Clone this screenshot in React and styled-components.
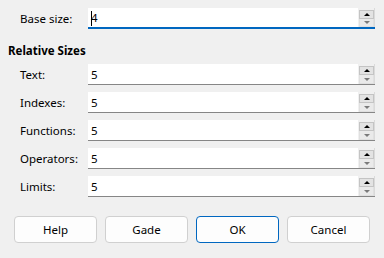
import React from 'react';
import styled, { createGlobalStyle } from 'styled-components';

const GlobalStyle = createGlobalStyle`
    html, body{
        margin: 0;
        padding: 0;
        background: #f0f0f0;
    }
    body{
        font-family: "Noto Sans", "Open Sans", sans-serif;
        font-size: 11.5px;
        color: #000;
    }
`;

const Dialog = styled.div`
    width: 384px;
    height: 258px;
    box-sizing: border-box;
    padding-top: 8px;
    background: #f0f0f0;
    display: flex;
    flex-direction: column;
`;

const FieldRow = styled.div`
    display: grid;
    grid-template-columns: 68px 287px;
    align-items: center;
    height: 21px;
    margin-left: 20px;
    margin-bottom: ${props => props.last ? '0' : '7px'};
`;

const Label = styled.label`
    line-height: 16px;
    white-space: nowrap;
`;

const SectionTitle = styled.div`
    font-weight: 700;
    line-height: 16px;
    margin: 14px 0 5px 8px;
`;

const SpinBox = styled.div`
    display: flex;
    height: 21px;
    box-sizing: border-box;
    border-bottom: ${props => props.focused ? '2px solid #0067c0' : '1px solid #868686'};
`;

const Value = styled.div`
    flex: 1;
    background: #fff;
    display: flex;
    align-items: center;
    padding-left: 3px;
    margin-right: 1px;
    line-height: 16px;
    padding-top: 1px;
`;

const Caret = styled.span`
    display: inline-block;
    width: 1px;
    height: 15px;
    background: #000;
    margin-right: -1px;
`;

const Spinner = styled.div`
    width: 16px;
    display: flex;
    flex-direction: column;
    padding-top: 2px;
    box-sizing: border-box;
    border-right: 1px solid #dadada;
`;

const SpinButton = styled.div`
    height: 9px;
    box-sizing: border-box;
    display: flex;
    align-items: center;
    justify-content: center;
    background: ${props => props.up ? '#e3e3e3' : '#eaeaea'};
    border: 1px solid ${props => props.up ? '#c4c4c4' : '#e0e0e0'};
    border-top-width: ${props => props.up ? '1px' : '0'};

    &::after{
        content: "";
        width: 0;
        height: 0;
        border-left: 3px solid transparent;
        border-right: 3px solid transparent;
        ${props => props.up
            ? 'border-bottom: 3px solid #000;'
            : 'border-top: 3px solid #7a7a7a;'}
    }
`;

const ButtonBar = styled.div`
    display: flex;
    gap: 8px;
    margin: 19px 0 0 14px;
`;

const Button = styled.button`
    width: 83px;
    height: 27px;
    box-sizing: border-box;
    background: #fdfdfd;
    border: 1px solid ${props => props.primary ? '#0067c0' : '#d0d0d0'};
    border-radius: 4px;
    font-family: inherit;
    font-size: 11.5px;
    color: #000;
    padding: 0;
    cursor: pointer;
`;

const SizeField = ({ label, value, focused, last }) => (
    <FieldRow last={last}>
        <Label>{label}</Label>
        <SpinBox focused={focused}>
            <Value>
                {focused && <Caret />}
                {value}
            </Value>
            <Spinner>
                <SpinButton up />
                <SpinButton />
            </Spinner>
        </SpinBox>
    </FieldRow>
);

const relativeSizes = [
    { label: 'Text:', value: 5 },
    { label: 'Indexes:', value: 5 },
    { label: 'Functions:', value: 5 },
    { label: 'Operators:', value: 5 },
    { label: 'Limits:', value: 5 },
];

export default function App(){
    return(
        <>
            <GlobalStyle />
            <Dialog>
                <SizeField label="Base size:" value={4} focused last />
                <SectionTitle>Relative Sizes</SectionTitle>
                {relativeSizes.map((item, i) => (
                    <SizeField
                        key={item.label}
                        label={item.label}
                        value={item.value}
                        last={i === relativeSizes.length - 1}
                    />
                ))}
                <ButtonBar>
                    <Button>Help</Button>
                    <Button>Gade</Button>
                    <Button primary>OK</Button>
                    <Button>Cancel</Button>
                </ButtonBar>
            </Dialog>
        </>
    )
}
